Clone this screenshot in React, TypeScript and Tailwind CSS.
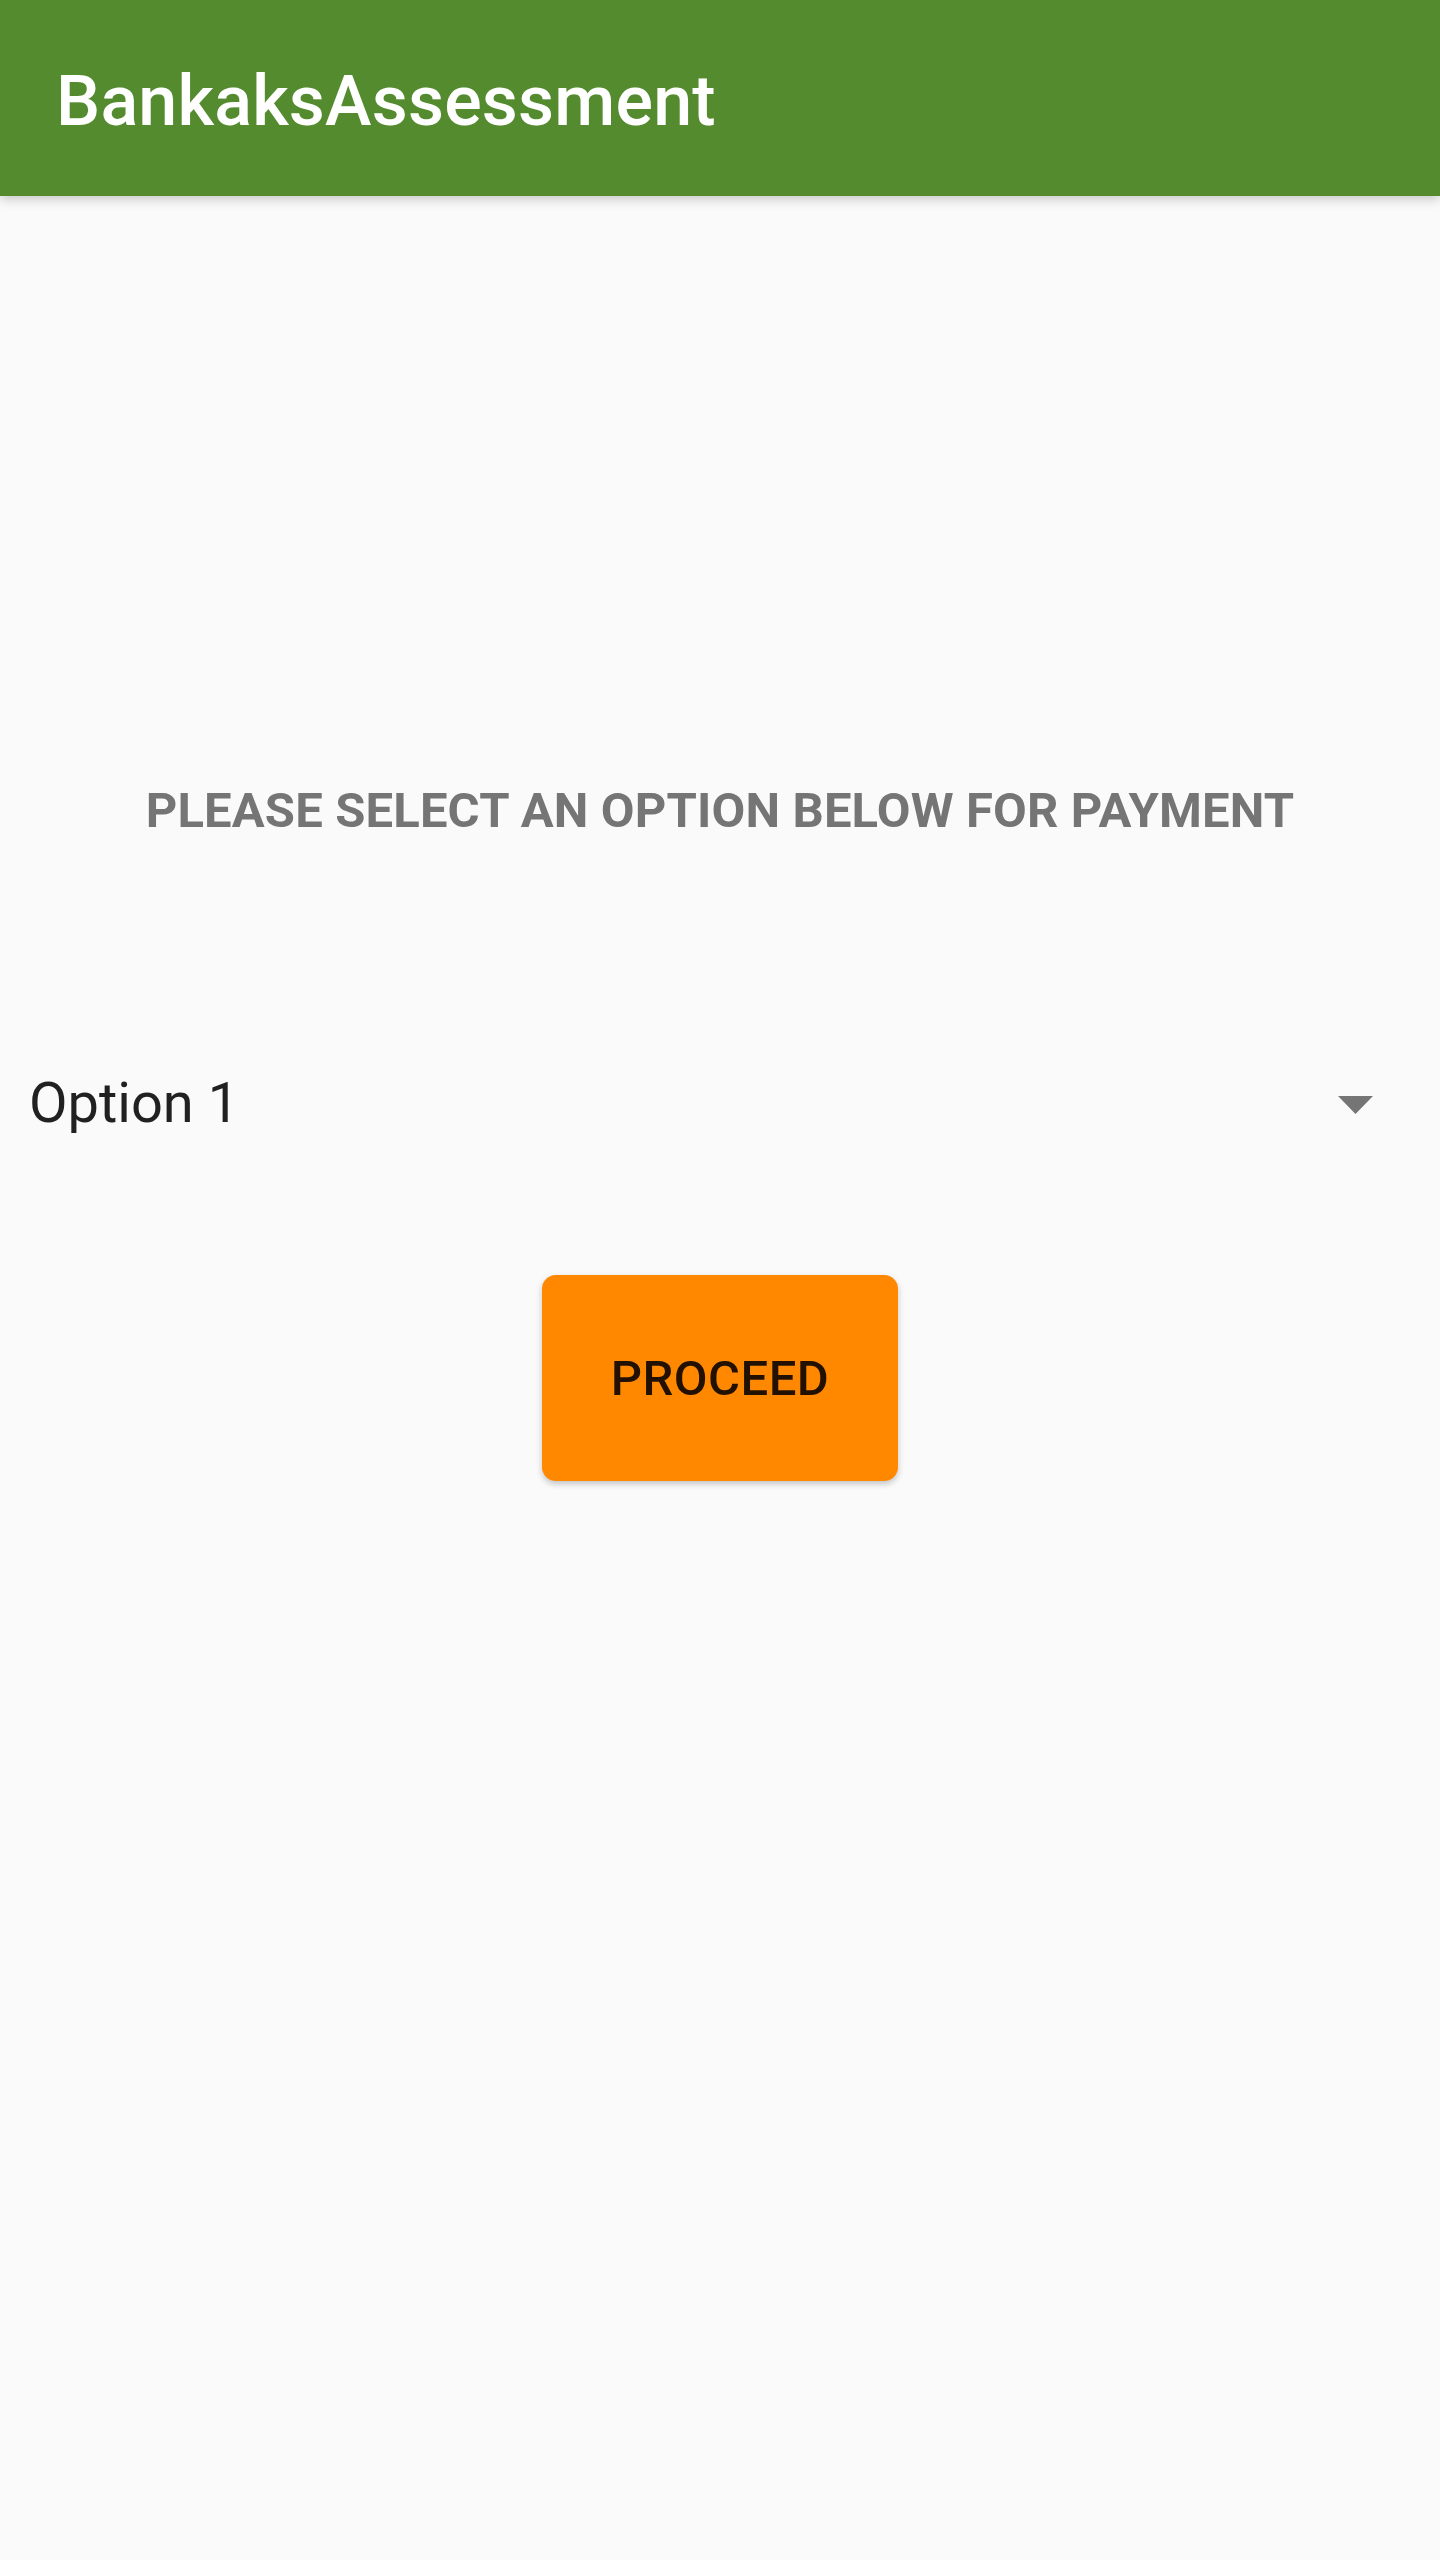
const App = () => {
  return (
    <div className="min-h-[2560px] w-full bg-[#fafafa] font-['Roboto',sans-serif]">
      {/* App bar */}
      <header className="relative z-10 h-[196px] bg-[#558b2f] px-[56px] pt-[66px] shadow-[0_4px_10px_rgba(0,0,0,0.18)]">
        <h1 className="text-[70px] leading-none font-medium tracking-[0.2px] text-white">BankaksAssessment</h1>
      </header>

      <main className="flex flex-col pt-[590px]">
        <p className="text-center text-[49px] leading-none font-bold tracking-[0.15px] text-[#757575]">
          PLEASE SELECT AN OPTION BELOW FOR PAYMENT
        </p>

        {/* Spinner */}
        <div className="mt-[240px] flex items-center justify-between pl-[29px] pr-[67px]">
          <span className="text-[56px] leading-none text-[#212121]">Option 1</span>
          <svg width="35" height="18" viewBox="0 0 35 18" className="mt-[4px]">
            <polygon points="0,0 35,0 17.5,18" fill="#757575" />
          </svg>
        </div>

        <div className="mt-[144px] flex justify-center">
          <button className="h-[206px] w-[356px] rounded-[14px] bg-[#ff8800] text-[49px] leading-none font-medium tracking-[0.5px] text-[#221100] shadow-[0_3px_6px_rgba(0,0,0,0.22)]">
            PROCEED
          </button>
        </div>
      </main>
    </div>
  );
};

export default App;
